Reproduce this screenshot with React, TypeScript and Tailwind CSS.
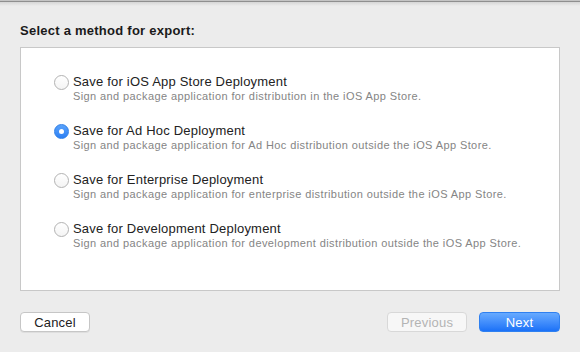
const options = [
  {
    title: 'Save for iOS App Store Deployment',
    desc: 'Sign and package application for distribution in the iOS App Store.',
    checked: false,
  },
  {
    title: 'Save for Ad Hoc Deployment',
    desc: 'Sign and package application for Ad Hoc distribution outside the iOS App Store.',
    checked: true,
  },
  {
    title: 'Save for Enterprise Deployment',
    desc: 'Sign and package application for enterprise distribution outside the iOS App Store.',
    checked: false,
  },
  {
    title: 'Save for Development Deployment',
    desc: 'Sign and package application for development distribution outside the iOS App Store.',
    checked: false,
  },
];

const Radio = ({ checked }: { checked: boolean }) =>
  checked ? (
    <div className="w-[15px] h-[15px] rounded-full bg-gradient-to-b from-[#5aa3fb] to-[#2b7ff4] border border-[#2f7fe6] flex items-center justify-center shrink-0">
      <div className="w-[5px] h-[5px] rounded-full bg-white" />
    </div>
  ) : (
    <div className="w-[15px] h-[15px] rounded-full bg-gradient-to-b from-white to-[#f4f4f4] border border-[#b2b2b2] shrink-0" />
  );

const App = () => (
  <main
    className="w-[580px] h-[352px] bg-[#ececec] overflow-hidden flex flex-col"
    style={{ fontFamily: '"Liberation Sans", Arial, sans-serif' }}
  >
    <div className="h-px bg-[#c4c4c4]" />
    <div className="h-px bg-[#8f8f8f]" />
    <div className="h-[4px] bg-gradient-to-b from-[#d6d6d6] to-[#ececec]" />

    <h1 className="px-[20px] pt-[17px] text-[13px] leading-[16px] font-bold tracking-[0.25px] text-[#1a1a1a]">
      Select a method for export:
    </h1>

    <section className="mx-[20px] mt-[8px] w-[540px] h-[244px] bg-white border border-[#c8c8c8] pt-[26px] pl-[33px] flex flex-col gap-[20px]">
      {options.map((o) => (
        <div key={o.title} className="flex items-start gap-[4px]">
          <div className="pt-[1px]">
            <Radio checked={o.checked} />
          </div>
          <div className="flex flex-col">
            <span className="text-[13px] leading-[16px] tracking-[0.2px] text-[#222]">{o.title}</span>
            <span className="text-[11px] leading-[13px] tracking-[0.4px] text-[#858585]">{o.desc}</span>
          </div>
        </div>
      ))}
    </section>

    <footer className="flex items-center px-[20px] mt-[21px]">
      <button className="w-[70px] h-[20px] rounded-[4px] bg-white border border-[#c6c6c6] shadow-[0_1px_0_rgba(0,0,0,0.06)] text-[13px] leading-none tracking-[0.2px] text-[#222]">
        Cancel
      </button>
      <div className="flex-1" />
      <button className="w-[80px] h-[20px] rounded-[4px] bg-[#f7f7f7] border border-[#d8d8d8] text-[13px] leading-none tracking-[0.2px] text-[#b4b4b4]">
        Previous
      </button>
      <button className="ml-[12px] w-[81px] h-[20px] rounded-[4px] bg-gradient-to-b from-[#67aaff] to-[#1a71f7] border border-[#2f80f0] text-[13px] leading-none tracking-[0.2px] text-white">
        Next
      </button>
    </footer>
  </main>
);

export default App;
